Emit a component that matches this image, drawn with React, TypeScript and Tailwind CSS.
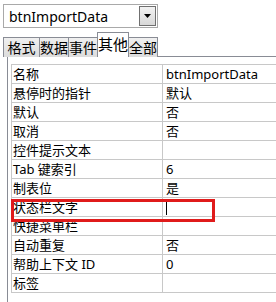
const rows: [string, string][] = [
  ['名称', 'btnImportData'],
  ['悬停时的指针', '默认'],
  ['默认', '否'],
  ['取消', '否'],
  ['控件提示文本', ''],
  ['Tab 键索引', '6'],
  ['制表位', '是'],
  ['状态栏文字', '|'],
  ['快捷菜单栏', ''],
  ['自动重复', '否'],
  ['帮助上下文 ID', '0'],
  ['标签', ''],
];

const tabs = [
  { label: '格式', w: 'w-[37px]' },
  { label: '数据', w: 'w-[30px]' },
  { label: '事件', w: 'w-[30px]' },
  { label: '其他', w: 'w-[32px]' },
  { label: '全部', w: 'w-[30px]' },
];

export default function App() {
  return (
    <div
      className="relative w-[276px] h-[302px] overflow-hidden bg-white text-[13px] text-black"
      style={{ fontFamily: '"Segoe UI", "Noto Sans", "Noto Sans CJK SC", sans-serif' }}
    >
      {/* Object combo */}
      <div className="ml-[3px] mt-[4px] flex h-[24px] w-[155px] items-center border border-[#a9a9a9]">
        <span className="flex-1 pl-[5px] text-[14px]">btnImportData</span>
        <div className="mr-[1px] flex h-[20px] w-[17px] items-center justify-center border border-[#707070] bg-gradient-to-b from-[#f2f2f2] to-[#d8d8d8]">
          <svg width="7" height="4" viewBox="0 0 7 4">
            <path d="M0 0h7L3.5 4z" fill="#000" />
          </svg>
        </div>
      </div>

      {/* Tabs */}
      <div className="relative z-10 -mb-px ml-[3px] mt-[5px] flex h-[24px] items-end">
        {tabs.map(({ label, w }, i) => {
          const active = label === '其他';
          return (
            <div
              key={label}
              className={
                (i > 0 ? '-ml-px ' : '') +
                w +
                (active
                  ? ' relative flex h-[25px] items-start justify-center whitespace-nowrap border border-b-0 border-[#898c95] bg-white pt-[2px] text-[15px] leading-[19px]'
                  : ' flex h-[20px] items-center justify-center whitespace-nowrap border border-b-0 border-[#898c95] bg-gradient-to-b from-[#f0f0f0] to-[#dcdcdc] text-[14px] leading-[18px]')
              }
            >
              {label}
            </div>
          );
        })}
      </div>

      {/* Property sheet */}
      <div className="ml-[7px] h-[260px] border-l border-t border-[#898c95] pl-[3px] pt-[7px]">
        <div className="border-l border-t border-[#c8c8c8]">
          {rows.map(([k, v]) => (
            <div key={k} className="flex h-[19px] border-b border-[#c8c8c8]">
              <div className="w-[151px] shrink-0 border-r border-[#c8c8c8] pl-[1px] leading-[18px]">{k}</div>
              <div className="flex-1 pl-[3px] leading-[18px]">
                {v === '|' ? <span className="mt-[2px] block h-[15px] w-px bg-black" /> : v}
              </div>
            </div>
          ))}
        </div>
      </div>

      {/* red annotation box */}
      <div className="absolute left-[11px] top-[199px] h-[23px] w-[204px] border-[3px] border-[#e01b1b]" />
    </div>
  );
}
